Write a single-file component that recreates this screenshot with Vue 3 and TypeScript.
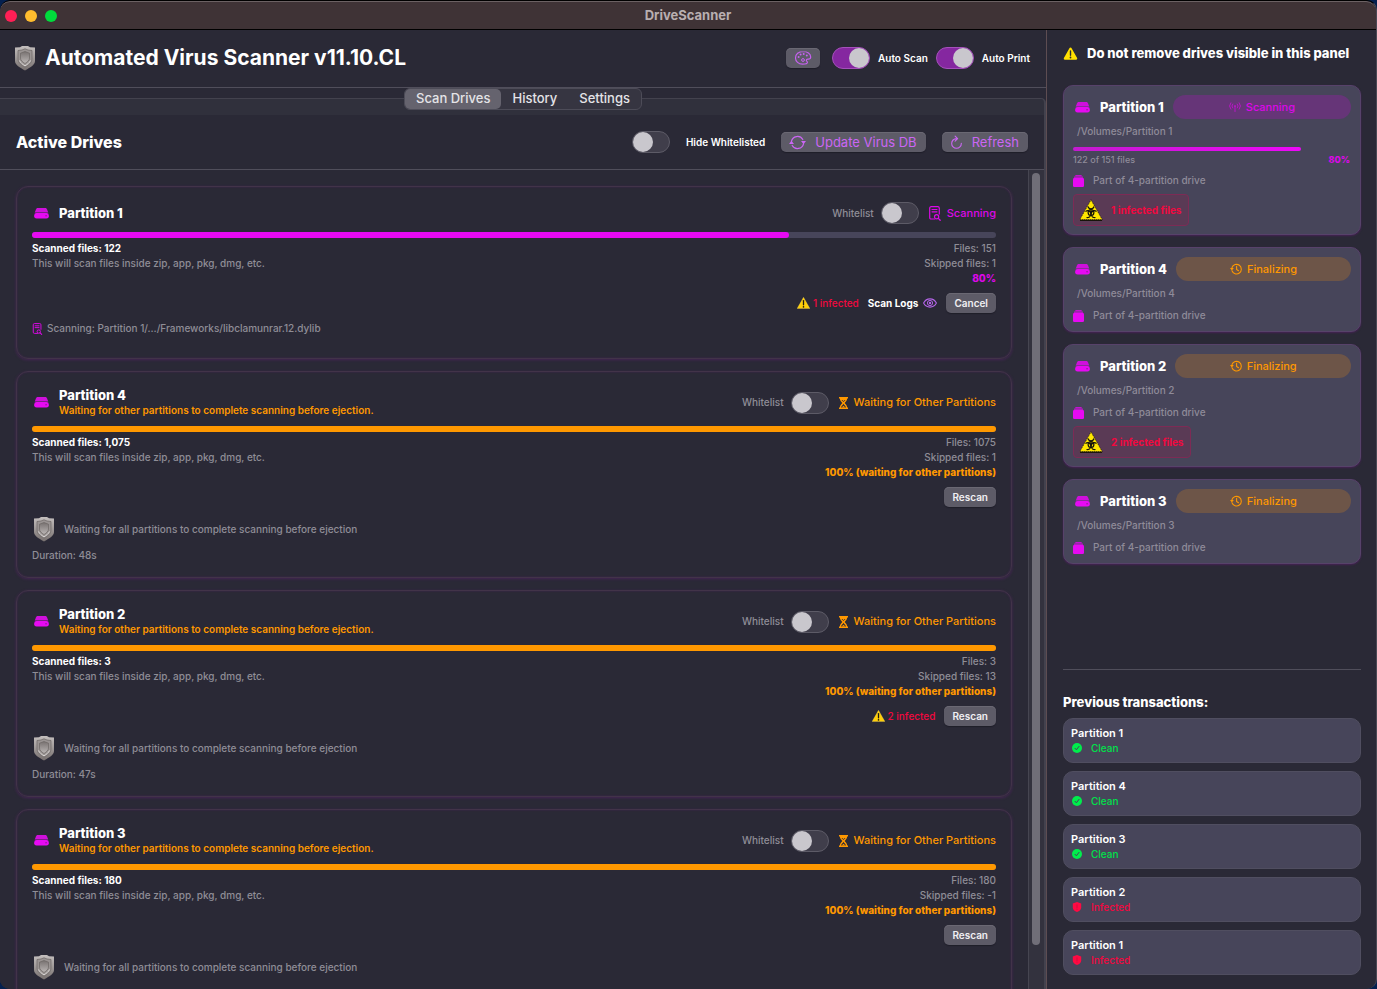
<script setup lang="ts">
import { ref } from 'vue'

interface Drive {
  name: string
  note?: string
  scanned: string
  files: string
  skipped: string
  percent: number
  percentText: string
  status: string
  infected: number
  waiting: boolean
  current?: string
  duration?: string
  whitelisted: boolean
}

interface PanelDrive {
  name: string
  path: string
  scanning: boolean
  done?: string
  percent?: number
  infected: number
}

interface Transaction {
  id: number
  name: string
  clean: boolean
}

const tabs = ['Scan Drives', 'History', 'Settings']
const activeTab = ref('Scan Drives')
const autoScan = ref(true)
const autoPrint = ref(true)
const hideWhitelisted = ref(false)

const waitNote = 'Waiting for other partitions to complete scanning before ejection.'
const waitPercent = '100% (waiting for other partitions)'
const waitStatus = 'Waiting for Other Partitions'

const drives = ref<Drive[]>([
  { name: 'Partition 1', scanned: '122', files: '151', skipped: '1', percent: 78.5, percentText: '80%', status: 'Scanning', infected: 1, waiting: false, current: 'Partition 1/…/Frameworks/libclamunrar.12.dylib', whitelisted: false },
  { name: 'Partition 4', note: waitNote, scanned: '1,075', files: '1075', skipped: '1', percent: 100, percentText: waitPercent, status: waitStatus, infected: 0, waiting: true, duration: '48s', whitelisted: false },
  { name: 'Partition 2', note: waitNote, scanned: '3', files: '3', skipped: '13', percent: 100, percentText: waitPercent, status: waitStatus, infected: 2, waiting: true, duration: '47s', whitelisted: false },
  { name: 'Partition 3', note: waitNote, scanned: '180', files: '180', skipped: '-1', percent: 100, percentText: waitPercent, status: waitStatus, infected: 0, waiting: true, whitelisted: false },
])

const panelDrives: PanelDrive[] = [
  { name: 'Partition 1', path: '/Volumes/Partition 1', scanning: true, done: '122 of 151 files', percent: 80, infected: 1 },
  { name: 'Partition 4', path: '/Volumes/Partition 4', scanning: false, infected: 0 },
  { name: 'Partition 2', path: '/Volumes/Partition 2', scanning: false, infected: 2 },
  { name: 'Partition 3', path: '/Volumes/Partition 3', scanning: false, infected: 0 },
]

const transactions: Transaction[] = [
  { id: 1, name: 'Partition 1', clean: true },
  { id: 2, name: 'Partition 4', clean: true },
  { id: 3, name: 'Partition 3', clean: true },
  { id: 4, name: 'Partition 2', clean: false },
  { id: 5, name: 'Partition 1', clean: false },
]
</script>

<template>
  <div class="window">
    <svg class="sprite" aria-hidden="true">
      <defs>
        <linearGradient id="steel" x1="0" y1="0" x2="0" y2="1">
          <stop offset="0" stop-color="#c4bfbe" />
          <stop offset="1" stop-color="#77706f" />
        </linearGradient>
        <linearGradient id="steelDark" x1="0" y1="0" x2="0" y2="1">
          <stop offset="0" stop-color="#777170" />
          <stop offset="1" stop-color="#bdb8b7" />
        </linearGradient>
      </defs>
      <symbol id="i-shield" viewBox="0 0 22 26">
        <path d="M1 2.500 6 2.200 8 1h6l2 1.200 5 .3V16c0 4-5 6.500-10 9.500C6 22.500 1 20 1 16Z" fill="url(#steel)" />
        <path d="M4 5.500 8 5l3-1.200L14 5l4 .5V14c0 4-3.500 6-7 8.200C7.500 20 4 18 4 14Z" fill="#9a9493" stroke="#6b6564" stroke-width=".7" />
        <path d="M5.500 15.500c1 2.400 3 3.700 5.500 5.300 2.500-1.600 4.500-2.900 5.500-5.300" fill="none" stroke="#d8d4d3" stroke-width="1" />
        <path d="M6.500 8.200 11 6.500l4.500 1.700V13c0 2.500-2 3.900-4.500 5.500C8.500 16.900 6.500 15.500 6.500 13Z" fill="url(#steelDark)" stroke="#6b6564" stroke-width=".7" />
      </symbol>
      <symbol id="i-drive" viewBox="0 0 16 12">
        <path d="M4 0h8c1 0 1.500.5 1.900 1.300l1.500 3.600H.6l1.500-3.600C2.500.5 3 0 4 0Z" fill="#cf10dc" />
        <rect x="0" y="5.500" width="16" height="6" rx="2.600" fill="#e60af2" />
        <circle cx="13" cy="8.500" r=".9" fill="#8b1a96" />
      </symbol>
      <symbol id="i-palette" viewBox="0 0 18 16">
        <path d="M9 1.500c-4.300 0-7.500 2.700-7.500 6.400 0 3.500 3 6.300 7 6.300 3.200 0 5-.8 5-1.900 0-.9-1.200-1-1.200-1.900 0-.8.700-1.200 1.500-1.200h.5c1.500 0 2.400-.8 2.400-2.200C16.700 3.700 13.300 1.500 9 1.500Z" fill="none" stroke="currentColor" stroke-width="1.200" />
        <g fill="currentColor"><circle cx="4.600" cy="7" r="1" /><circle cx="6.600" cy="4.500" r="1" /><circle cx="9.700" cy="4" r="1" /><circle cx="12.800" cy="5.500" r="1" /></g>
        <circle cx="9" cy="10" r="1.400" fill="none" stroke="currentColor" />
      </symbol>
      <symbol id="i-sync" viewBox="0 0 16 14">
        <path d="M2.300 6A5.800 5.800 0 0 1 13 4.200M13.700 8A5.800 5.800 0 0 1 3 9.800" fill="none" stroke="currentColor" stroke-width="1.100" stroke-linecap="round" />
        <path d="m0 8.300 2.300-3 2.400 3ZM11.300 5.700l2.400 3 2.300-3Z" fill="currentColor" />
      </symbol>
      <symbol id="i-refresh" viewBox="0 0 14 16">
        <path d="M7 3.800a5.200 5.200 0 1 0 5.200 5.200M5.500 1.200 8.200 3.900 5.500 6.600" fill="none" stroke="currentColor" stroke-width="1.200" stroke-linecap="round" stroke-linejoin="round" />
      </symbol>
      <symbol id="i-doc" viewBox="0 0 12 15">
        <path d="M6 13H2.200C1.200 13 .7 12.500.7 11.500V2.200C.7 1.200 1.200.7 2.200.7h6.600c1 0 1.500.5 1.500 1.500V8M3 3.500h5M3 5.800h5" fill="none" stroke="currentColor" stroke-width="1.200" stroke-linecap="round" />
        <circle cx="7.600" cy="10.700" r="2.100" fill="none" stroke="currentColor" stroke-width="1.200" />
        <path d="m9.300 12.400 1.900 1.900" stroke="currentColor" stroke-width="1.300" stroke-linecap="round" />
      </symbol>
      <symbol id="i-hourglass" viewBox="0 0 9 12">
        <path d="M0 0h9v1.500H8.200C8.200 4 6.200 4.800 5.700 6c.5 1.200 2.500 2 2.500 4.500H9V12H0v-1.500h.8C.8 8 2.800 7.200 3.300 6 2.800 4.800.8 4 .8 1.500H0Z" fill="currentColor" />
        <path d="M2.600 3C3 4 4 4.200 4.500 5 5 4.200 6 4 6.400 3ZM2 10.500C2.200 9 4 8 4.500 6.800 5 8 6.800 9 7 10.500Z" fill="#2a2936" />
        <path d="M3.400 3h2.200L4.500 4.300ZM2.600 10.500 4.500 8.800l1.900 1.700Z" fill="currentColor" />
      </symbol>
      <symbol id="i-eye" viewBox="0 0 14 10">
        <path d="M.6 5C2 2.300 4.200.9 7 .9S12 2.300 13.400 5C12 7.700 9.800 9.100 7 9.100S2 7.700.6 5Z" fill="none" stroke="currentColor" stroke-width="1.100" />
        <circle cx="7" cy="5" r="2.600" fill="none" stroke="currentColor" stroke-width="1" />
        <circle cx="7" cy="5" r="1.200" fill="currentColor" />
      </symbol>
      <symbol id="i-warn" viewBox="0 0 14 13">
        <path d="M7 .6c.5 0 .9.200 1.100.7l5.500 9.700c.4.800 0 1.700-1 1.700H1.400c-1 0-1.400-.9-1-1.700l5.500-9.700C6.100.8 6.500.6 7 .6Z" fill="#ffe000" />
        <path d="M7 4v4.300" stroke="#2a2936" stroke-width="1.400" stroke-linecap="round" />
        <circle cx="7" cy="10.500" r=".9" fill="#2a2936" />
      </symbol>
      <symbol id="i-emoji-warn" viewBox="0 0 13 12">
        <path d="M6.500.3 12.900 11.600H.1Z" fill="#ffcf0a" stroke="#f6dc6a" stroke-width=".3" stroke-linejoin="round" />
        <path d="M6.500 3.600v4.200" stroke="#1e1a10" stroke-width="1.300" stroke-linecap="round" />
        <circle cx="6.500" cy="9.900" r=".8" fill="#1e1a10" />
      </symbol>
      <symbol id="i-antenna" viewBox="0 0 12 10">
        <g fill="none" stroke="currentColor" stroke-width=".7" stroke-linecap="round">
          <path d="M1.800.8a5 5 0 0 0 0 6.400M10.200.8a5 5 0 0 1 0 6.400M3.700 2a3 3 0 0 0 0 4M8.300 2a3 3 0 0 1 0 4M6 4.200v5.300" />
        </g>
        <circle cx="6" cy="4" r=".8" fill="currentColor" />
      </symbol>
      <symbol id="i-history" viewBox="0 0 12 12">
        <path d="M2 4.500A4.800 4.800 0 1 1 2 7.800M6.600 3.400v3l1.900 1.300" fill="none" stroke="currentColor" stroke-width="1.100" stroke-linecap="round" />
        <path d="M0 5h3.800L1.900 7.500Z" fill="currentColor" />
      </symbol>
      <symbol id="i-stack" viewBox="0 0 11 12">
        <rect x="2.200" y="0" width="6.600" height="1.200" rx=".6" fill="#c412d2" />
        <rect x="1" y="1.500" width="9" height="1.300" rx=".6" fill="#d40ee0" />
        <rect x="0" y="3" width="11" height="9" rx="1.200" fill="#e60af2" />
      </symbol>
      <symbol id="i-biohazard" viewBox="0 0 24 22">
        <path d="M12 .8 23.300 20.700H.7Z" fill="#ffe600" stroke="#16140a" stroke-width=".8" stroke-dasharray="1 1" />
        <path d="M1 21.300h22" stroke="#16140a" stroke-width="1.200" />
        <g fill="none" stroke="#16140a" stroke-width="1.200">
          <path d="M9 7.500a3.100 3.100 0 0 0 6 0M6.500 12.600a3 3 0 0 1 4.300 4.600M17.500 12.600a3 3 0 0 0-4.300 4.600M7.500 18.500c1.500.3 3-.2 3.700-1.300M16.500 18.500c-1.500.3-3-.2-3.700-1.300M12 10.500v2.500" />
          <circle cx="12" cy="13.600" r="2.900" />
        </g>
        <circle cx="12" cy="13.800" r="1" fill="#16140a" />
      </symbol>
      <symbol id="i-check" viewBox="0 0 10 10">
        <circle cx="5" cy="5" r="5" fill="#00ed4c" />
        <path d="m3 5.300 1.400 1.500L7 3.400" fill="none" stroke="#47455a" stroke-width="1" stroke-linecap="round" />
      </symbol>
      <symbol id="i-shield-alert" viewBox="0 0 10 10">
        <path d="M5 0 9.200 1.400v4C9.200 7.700 7.500 9 5 10 2.500 9 .8 7.700.8 5.400v-4Z" fill="#ff0a43" />
        <path d="M5 2.800v2.800M5 7v.5" stroke="#d00d3c" stroke-width=".9" stroke-linecap="round" />
      </symbol>
    </svg>

    <header class="titlebar">
      <div class="lights">
        <button class="light red" aria-label="Close"></button>
        <button class="light yellow" aria-label="Minimize"></button>
        <button class="light green" aria-label="Zoom"></button>
      </div>
      <span class="window-title">DriveScanner</span>
    </header>

    <div class="body">
      <main class="main">
        <div class="app-head">
          <svg class="logo"><use href="#i-shield" /></svg>
          <h1>Automated Virus Scanner v11.10.CL</h1>
          <button class="btn palette" aria-label="Theme"><svg><use href="#i-palette" /></svg></button>
          <label class="switch-label"><input v-model="autoScan" type="checkbox" role="switch" class="switch" />Auto Scan</label>
          <label class="switch-label"><input v-model="autoPrint" type="checkbox" role="switch" class="switch" />Auto Print</label>
        </div>

        <div class="tab-row">
          <nav class="tabs" role="tablist">
            <button
              v-for="tab in tabs"
              :key="tab"
              role="tab"
              class="tab"
              :class="{ active: tab === activeTab }"
              :aria-selected="tab === activeTab"
              @click="activeTab = tab"
            >{{ tab }}</button>
          </nav>
        </div>

        <section class="pane">
          <div class="toolbar">
            <h2>Active Drives</h2>
            <label class="switch-label wide"><input v-model="hideWhitelisted" type="checkbox" role="switch" class="switch" />Hide Whitelisted</label>
            <button class="btn tool"><svg class="ic-sync"><use href="#i-sync" /></svg>Update Virus DB</button>
            <button class="btn tool"><svg class="ic-refresh"><use href="#i-refresh" /></svg>Refresh</button>
          </div>

          <div class="scroll">
            <div class="list">
              <article v-for="d in drives" :key="d.name" class="card" :class="{ waiting: d.waiting }">
                <div class="card-head">
                  <svg class="ic-drive"><use href="#i-drive" /></svg>
                  <div class="names">
                    <h3>{{ d.name }}</h3>
                    <p v-if="d.note">{{ d.note }}</p>
                  </div>
                  <label class="whitelist">Whitelist<input v-model="d.whitelisted" type="checkbox" role="switch" class="switch" /></label>
                  <span class="status">
                    <svg v-if="d.waiting" class="ic-hour"><use href="#i-hourglass" /></svg>
                    <svg v-else class="ic-doc"><use href="#i-doc" /></svg>
                    {{ d.status }}
                  </span>
                </div>
                <div class="bar" role="progressbar" :aria-valuenow="d.percent"><div class="fill" :style="{ width: d.percent + '%' }"></div></div>
                <div class="stats">
                  <div>
                    <p class="scanned">Scanned files: {{ d.scanned }}</p>
                    <p>This will scan files inside zip, app, pkg, dmg, etc.</p>
                  </div>
                  <div class="right">
                    <p>Files: {{ d.files }}</p>
                    <p>Skipped files: {{ d.skipped }}</p>
                    <p class="percent">{{ d.percentText }}</p>
                  </div>
                </div>
                <div class="actions">
                  <span v-if="d.infected" class="infected"><svg><use href="#i-emoji-warn" /></svg>{{ d.infected }} infected</span>
                  <button v-if="!d.waiting" class="logs">Scan Logs<svg><use href="#i-eye" /></svg></button>
                  <button class="btn small">{{ d.waiting ? 'Rescan' : 'Cancel' }}</button>
                </div>
                <p v-if="d.current" class="current"><svg><use href="#i-doc" /></svg>Scanning: {{ d.current }}</p>
                <p v-else class="wait"><svg><use href="#i-shield" /></svg>Waiting for all partitions to complete scanning before ejection</p>
                <p v-if="d.duration" class="duration">Duration: {{ d.duration }}</p>
              </article>
            </div>
            <div class="track"><div class="thumb"></div></div>
          </div>
        </section>
      </main>

      <aside class="side">
        <h2 class="side-title"><svg><use href="#i-warn" /></svg>Do not remove drives visible in this panel</h2>

        <div class="panel-list">
          <article v-for="p in panelDrives" :key="p.name" class="pcard">
            <div class="pcard-head">
              <svg class="ic-drive"><use href="#i-drive" /></svg>
              <h3>{{ p.name }}</h3>
              <span class="pill" :class="{ scanning: p.scanning }">
                <svg><use :href="p.scanning ? '#i-antenna' : '#i-history'" /></svg>{{ p.scanning ? 'Scanning' : 'Finalizing' }}
              </span>
            </div>
            <p class="path">{{ p.path }}</p>
            <div v-if="p.percent" class="mini">
              <div class="mini-bar" role="progressbar" :aria-valuenow="p.percent"><div class="mini-fill" :style="{ width: p.percent + 2 + '%' }"></div></div>
              <div class="mini-text"><span>{{ p.done }}</span><strong>{{ p.percent }}%</strong></div>
            </div>
            <p class="part"><svg><use href="#i-stack" /></svg>Part of 4-partition drive</p>
            <p v-if="p.infected" class="alert"><svg><use href="#i-biohazard" /></svg>{{ p.infected }} infected files</p>
          </article>
        </div>

        <section class="history">
          <h2>Previous transactions:</h2>
          <article v-for="t in transactions" :key="t.id" class="tcard">
            <h3>{{ t.name }}</h3>
            <p :class="t.clean ? 'clean' : 'bad'">
              <svg><use :href="t.clean ? '#i-check' : '#i-shield-alert'" /></svg>{{ t.clean ? 'Clean' : 'Infected' }}
            </p>
          </article>
        </section>
      </aside>
    </div>
  </div>
</template>

<style>
body {
  background: #04204f;
}
</style>

<style scoped>
* {
  box-sizing: border-box;
}

.window {
  height: 100vh;
  display: flex;
  flex-direction: column;
  overflow: hidden;
  background: #2a2936;
  border-top: 1px solid #000;
  border-right: 1px solid #4a4955;
  border-radius: 10px;
  color: #fff;
  font-family: Inter, "Liberation Sans", sans-serif;
  font-size: 10px;
  line-height: 15px;
  font-weight: 500;
}

h1, h2, h3, p {
  margin: 0;
}

svg {
  flex: none;
}

.sprite {
  position: absolute;
  width: 0;
  height: 0;
}

button {
  font: inherit;
  border: 0;
  padding: 0;
}

/* Title bar */
.titlebar {
  flex: none;
  height: 29px;
  display: grid;
  grid-template-columns: 1fr auto 1fr;
  align-items: center;
  background: #3f3336;
  border-top: 1px solid #6b6163;
  border-bottom: 1px solid #000;
  border-radius: 10px 10px 0 0;
}

.lights {
  display: flex;
  gap: 8px;
  padding-left: 5px;
}

.light {
  width: 12px;
  height: 12px;
  border-radius: 50%;
}

.red { background: #ff1f55; }
.yellow { background: #ffbd2e; }
.green { background: #00dc3c; }

.window-title {
  font-size: 13px;
  font-weight: 700;
  color: #b9afb1;
}

.body {
  flex: 1;
  min-height: 0;
  display: grid;
  grid-template-columns: minmax(0, 1fr) 330px;
}

/* Main column */
.main {
  display: flex;
  flex-direction: column;
  min-height: 0;
}

.app-head {
  flex: none;
  height: 58px;
  display: flex;
  align-items: center;
  padding: 0 16px 1px 14px;
  border-bottom: 1px solid #504e5b;
}

.logo {
  width: 22px;
  height: 26px;
}

h1 {
  flex: 1;
  margin-left: 9px;
  font-size: 21px;
  line-height: 26px;
  font-weight: 700;
}

.btn {
  background: #5d5b67;
  border-radius: 5px;
  box-shadow: inset 0 1px 0 #6a6873, 0 1px 1px #1f1e29;
}

.palette {
  width: 34px;
  height: 20px;
  margin-right: 12px;
  color: #c561ee;
  display: grid;
  place-items: center;
}

.palette svg {
  width: 18px;
  height: 16px;
}

.switch-label {
  display: flex;
  align-items: center;
  gap: 8px;
  font-weight: 600;
}

.switch-label + .switch-label {
  margin-left: 8px;
}

.switch {
  appearance: none;
  flex: none;
  width: 38px;
  height: 22px;
  margin: 0;
  padding: 0;
  border: 1px solid #5d5b67;
  border-radius: 11px;
  background: #403e4b;
  display: flex;
}

.switch::before {
  content: "";
  width: 20px;
  height: 20px;
  border-radius: 50%;
  background: #c9c7cd;
}

.switch:checked {
  justify-content: flex-end;
  background: #8527a0;
  border-color: #a550bb;
}

/* Tabs straddle the upper edge of the pane */
.tab-row {
  flex: none;
  height: 10px;
  display: flex;
  justify-content: center;
  align-items: flex-start;
  position: relative;
}

.tabs {
  display: flex;
  height: 22px;
  background: #363541;
  border: 1px solid #4d4c58;
  border-radius: 6px;
}

.tab {
  background: none;
  color: #e4e3e7;
  font-size: 13px;
  line-height: 18px;
  padding: 0 11px 2px;
  border-radius: 5px;
}

.tab.active {
  background: #65636e;
}

.pane {
  flex: 1;
  min-height: 0;
  display: flex;
  flex-direction: column;
  border: solid #43424e;
  border-width: 1px 2px 0 0;
  border-top-right-radius: 5px;
  background: #30303c;
  padding-top: 16px;
}

.toolbar {
  flex: none;
  height: 55px;
  display: flex;
  align-items: center;
  gap: 16px;
  padding: 0 16px;
  background: #2a2936;
  border-bottom: 1px solid #504e5b;
}

.toolbar h2 {
  flex: 1;
  font-size: 16px;
  line-height: 20px;
  font-weight: 800;
}

.switch-label.wide {
  gap: 16px;
}

.tool {
  height: 20px;
  display: flex;
  align-items: center;
  gap: 9px;
  padding: 0 9px 0 8px;
  font-size: 13px;
  font-weight: 400;
  color: #cb66f4;
}

.ic-sync { width: 17px; height: 15px; }
.ic-refresh { width: 13px; height: 15px; }

.scroll {
  flex: 1;
  min-height: 0;
  display: flex;
  background: #2a2936;
}

.list {
  flex: 1;
  overflow: hidden;
  padding: 16px 16px 0;
  display: flex;
  flex-direction: column;
  gap: 12px;
}

.track {
  flex: none;
  width: 16px;
  padding: 3px;
  background: #33323e;
  border-left: 1px solid #464551;
}

.thumb {
  width: 8px;
  height: 95%;
  border-radius: 4px;
  background: #706e78;
}

/* Drive cards */
.card {
  flex: none;
  padding: 15px 15px 14px;
  border: 1px solid #423349;
  border-radius: 12px;
  box-shadow: 0 1px 3px rgba(110, 30, 130, .4), inset 0 0 2px rgba(110, 30, 130, .4);
  color: #8f8d96;
}

.card.waiting {
  min-height: 207px;
}

.card-head {
  display: flex;
  align-items: center;
  min-height: 22px;
}

.ic-drive {
  width: 15px;
  height: 11px;
  margin: 0 10px 0 2px;
}

.names {
  flex: 1;
}

h3 {
  color: #fff;
  font-size: 13px;
  line-height: 16px;
  font-weight: 800;
}

.names p {
  color: #ff9800;
  font-weight: 600;
}

.whitelist {
  display: flex;
  align-items: center;
  gap: 7px;
}

.status {
  display: flex;
  align-items: center;
  gap: 6px;
  margin-left: 10px;
  font-size: 11px;
  color: #dc08e8;
}

.waiting .status {
  color: #ff9800;
}

.ic-hour { width: 9px; height: 12px; }
.ic-doc { width: 12px; height: 15px; }

.bar {
  height: 6px;
  margin-top: 8px;
  border-radius: 3px;
  background: #47455a;
}

.fill {
  height: 6px;
  border-radius: 3px;
  background: #e60af2;
}

.waiting .fill {
  background: #ff9800;
}

.stats {
  display: flex;
  justify-content: space-between;
  margin-top: 3px;
}

.right {
  text-align: right;
}

.scanned {
  color: #fff;
  font-weight: 700;
}

.percent {
  color: #dc08e8;
  font-weight: 800;
}

.waiting .percent {
  color: #ff9800;
}

.actions {
  display: flex;
  justify-content: flex-end;
  align-items: center;
  gap: 9px;
  height: 20px;
  margin-top: 7px;
}

.infected {
  display: flex;
  align-items: center;
  gap: 3px;
  color: #f2083f;
}

.infected svg { width: 13px; height: 12px; }

.logs {
  display: flex;
  align-items: center;
  gap: 5px;
  background: none;
  color: #fff;
  font-weight: 700;
}

.logs svg {
  width: 14px;
  height: 10px;
  color: #b264e6;
}

.small {
  height: 20px;
  padding: 0 8px;
  color: #f0eff2;
  font-weight: 600;
}

.current {
  display: flex;
  align-items: center;
  gap: 4px;
  margin: 8px 0;
}

.current svg {
  width: 11px;
  height: 12px;
  color: #dc08e8;
}

.wait {
  display: flex;
  align-items: center;
  gap: 8px;
  margin-top: 9px;
}

.wait svg {
  width: 24px;
  height: 26px;
}

.duration {
  margin-top: 6px;
}

/* Side panel */
.side {
  display: flex;
  flex-direction: column;
  min-height: 0;
  padding: 14px 15px;
  padding-left: 16px;
  border-left: 1px solid #5e4d52;
}

.side-title {
  display: flex;
  align-items: center;
  gap: 9px;
  height: 18px;
  font-size: 13px;
  font-weight: 800;
}

.side-title svg {
  width: 15px;
  height: 13px;
}

.panel-list {
  display: flex;
  flex-direction: column;
  gap: 12px;
  margin-top: 23px;
}

.pcard {
  padding: 9px 9px 8px;
  border: 1px solid #57426a;
  border-radius: 10px;
  background: #47455a;
  color: #8f8b99;
  box-shadow: 0 1px 2px rgba(120, 20, 140, .35);
}

.pcard-head {
  display: flex;
  align-items: center;
}

.pill {
  flex: 1;
  height: 24px;
  margin-left: 9px;
  border-radius: 12px;
  display: flex;
  align-items: center;
  justify-content: center;
  gap: 5px;
  font-size: 11px;
  background: #6d5548;
  color: #ff9800;
}

.pill.scanning {
  background: #663578;
  color: #dc08e8;
}

.pill svg { width: 12px; height: 12px; }

.path {
  margin: 5px 0 0 4px;
}

.mini {
  margin-top: 8px;
}

.mini-bar {
  height: 4px;
}

.mini-fill {
  height: 4px;
  border-radius: 2px;
  background: linear-gradient(90deg, #c41ad0, #ee08f8);
}

.mini-text {
  display: flex;
  justify-content: space-between;
  margin-top: 2px;
  font-size: 9px;
  line-height: 13px;
}

.mini-text strong {
  color: #dc08e8;
  font-weight: 800;
  padding-right: 1px;
}

.part {
  display: flex;
  align-items: center;
  gap: 9px;
  margin-top: 7px;
}

.part svg {
  width: 11px;
  height: 12px;
}

.alert {
  width: fit-content;
  height: 32px;
  margin-top: 6px;
  padding: 0 7px 0 5px;
  display: flex;
  align-items: center;
  gap: 8px;
  border: 1px solid #7d2b55;
  border-radius: 4px;
  background: #5a3a55;
  color: #f2083f;
  font-weight: 700;
}

.alert svg {
  width: 24px;
  height: 22px;
}

.history {
  margin-top: auto;
  border-top: 1px solid #504e5b;
  display: flex;
  flex-direction: column;
  gap: 8px;
}

.history h2 {
  margin-top: 24px;
  font-size: 13px;
  line-height: 16px;
  font-weight: 800;
}

.tcard {
  padding: 7px;
  border: 1px solid #504e60;
  border-radius: 10px;
  background: #47455a;
}

.tcard h3 {
  font-size: 11px;
  line-height: 15px;
  font-weight: 600;
}

.tcard p {
  display: flex;
  align-items: center;
  gap: 9px;
  padding-left: 1px;
  line-height: 14px;
}

.tcard svg {
  width: 10px;
  height: 10px;
}

.clean { color: #00e04a; }
.bad { color: #f2083f; }
</style>
